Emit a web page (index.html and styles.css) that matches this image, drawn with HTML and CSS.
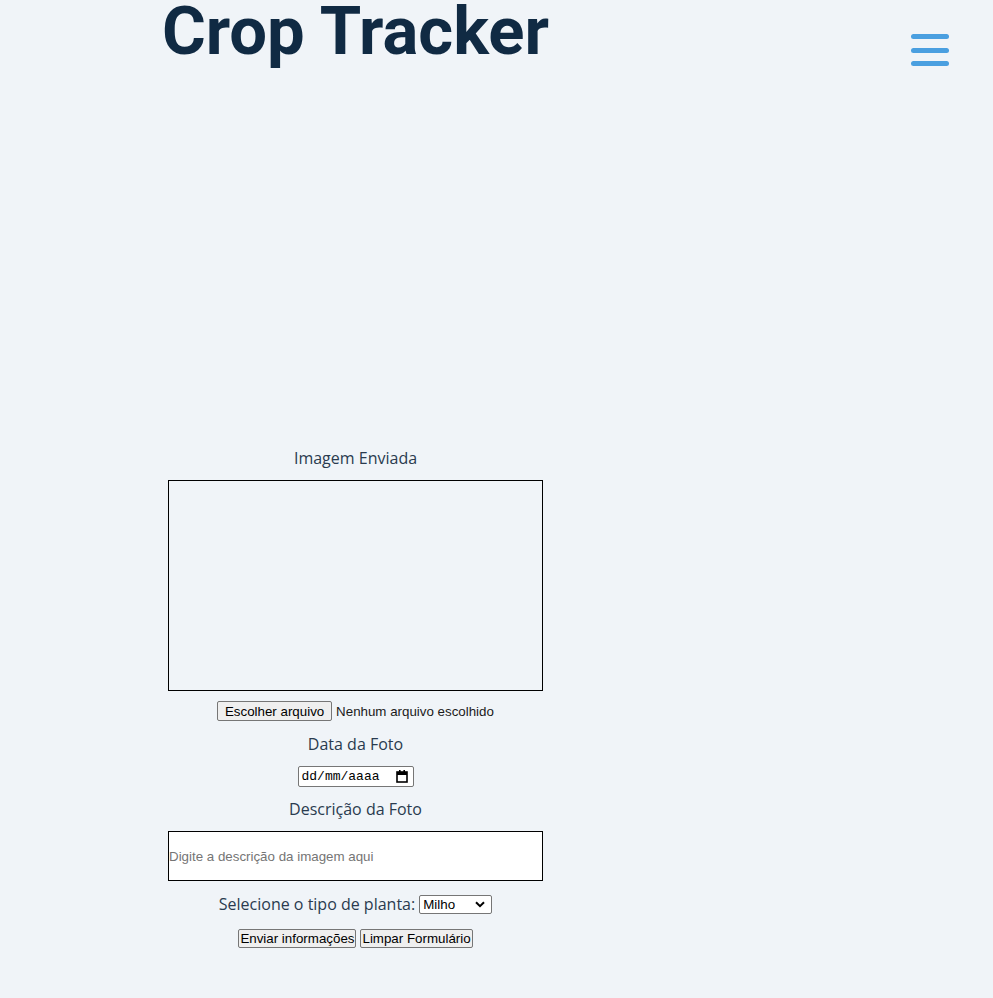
FILE: index.html
```html
<!DOCTYPE html>
<html lang="pt-BR">
<head>
<meta charset="utf-8">
<title>Crop Tracker</title>
<link rel="stylesheet" href="styles.css">
</head>
<body>
<header class="topbar">
  <h1 class="brand">Crop Tracker</h1>
  <button class="menu-btn" aria-label="Menu">
    <span class="bar"></span><span class="bar"></span><span class="bar"></span>
  </button>
</header>
<main class="panel">
  <p class="label label-first">Imagem Enviada</p>
  <div class="preview"></div>
  <div class="file-row">
    <span class="btn btn-file">Escolher arquivo</span>
    <span class="file-status">Nenhum arquivo escolhido</span>
  </div>
  <p class="label label-date">Data da Foto</p>
  <div class="date-input">
    <span class="date-text">dd/mm/aaaa</span>
    <svg class="cal" width="12" height="13" viewBox="0 0 12 13" aria-hidden="true">
      <rect x="1" y="2" width="10" height="10" fill="none" stroke="#000" stroke-width="1.6"/>
      <rect x="1" y="2" width="10" height="3" fill="#000"/>
      <rect x="3" y="0" width="1.6" height="3" fill="#000"/>
      <rect x="7.4" y="0" width="1.6" height="3" fill="#000"/>
    </svg>
  </div>
  <p class="label label-desc">Descrição da Foto</p>
  <input class="desc-input" type="text" placeholder="Digite a descrição da imagem aqui">
  <div class="plant-row">
    <span class="plant-label">Selecione o tipo de planta:</span>
    <span class="select">
      <span class="select-text">Milho</span>
      <svg class="chev" width="10" height="7" viewBox="0 0 10 7" aria-hidden="true">
        <path d="M1 1.2 L5 5.2 L9 1.2" fill="none" stroke="#000" stroke-width="2"/>
      </svg>
    </span>
  </div>
  <div class="actions">
    <button class="btn btn-action">Enviar informações</button>
    <button class="btn btn-action">Limpar Formulário</button>
  </div>
</main>
</body>
</html>
```
FILE: styles.css
```css
* { box-sizing: border-box; }

body {
  margin: 0;
  background: #f0f4f8;
  font-family: "Open Sans", "Noto Sans", sans-serif;
  color: #243b53;
}

.topbar {
  display: flex;
  justify-content: space-between;
  align-items: flex-start;
}

.brand {
  width: 375px;
  margin: 0 0 0 168px;
  font-family: Roboto, "Liberation Sans", sans-serif;
  font-weight: 700;
  font-size: 67px;
  line-height: 62px;
  color: #102a43;
  text-align: center;
  white-space: nowrap;
  display: flex;
  justify-content: center;
}

.menu-btn {
  margin: 34px 44px 0 0;
  padding: 0;
  border: 0;
  background: none;
  display: flex;
  flex-direction: column;
  gap: 8.5px;
  cursor: pointer;
}

.bar {
  display: block;
  width: 38px;
  height: 5px;
  border-radius: 3px;
  background: #4a9fe0;
}

.panel {
  width: 375px;
  margin-left: 168px;
  padding-top: 381px;
  display: flex;
  flex-direction: column;
  align-items: center;
}

.label {
  margin: 0;
  font-size: 16px;
  line-height: 22px;
  color: #2a3b4f;
}

.label-date { margin-top: 12px; }
.label-desc { margin-top: 11px; }

.preview {
  margin-top: 11px;
  width: 375px;
  height: 211px;
  border: 1px solid #000;
}

.btn {
  font-family: "Liberation Sans", Arial, sans-serif;
  font-size: 13.33px;
  color: #000;
  background: #efefef;
  border: 1px solid #767676;
  border-radius: 2px;
  display: inline-flex;
  align-items: center;
  justify-content: center;
}

.file-row {
  margin-top: 10px;
  display: flex;
  align-items: center;
  gap: 4px;
  font-family: "Liberation Sans", Arial, sans-serif;
  font-size: 13.33px;
  color: #000;
}

.btn-file {
  width: 115px;
  height: 20px;
}

.file-status { color: #1b1b1b; }

.date-input {
  margin-top: 11px;
  width: 116px;
  height: 21px;
  border: 1px solid #767676;
  border-radius: 2px;
  background: #fff;
  display: flex;
  align-items: center;
  justify-content: space-between;
  padding: 0 5px 0 3px;
}

.date-text {
  font-family: "Liberation Mono", monospace;
  font-size: 13px;
  color: #000;
}

.desc-input {
  margin-top: 11px;
  width: 375px;
  height: 50px;
  border: 1px solid #000;
  background: #fff;
  padding: 0;
  font-family: "Liberation Sans", Arial, sans-serif;
  font-size: 13.33px;
}

.desc-input::placeholder { color: #757575; }

.plant-row {
  margin-top: 12px;
  display: flex;
  align-items: center;
  gap: 4px;
}

.plant-label {
  font-size: 16px;
  line-height: 22px;
  color: #2a3b4f;
}

.select {
  width: 73px;
  height: 19px;
  border: 1px solid #767676;
  border-radius: 2px;
  background: #fff;
  display: flex;
  align-items: center;
  justify-content: space-between;
  padding: 0 6px 0 3px;
  font-family: "Liberation Sans", Arial, sans-serif;
  font-size: 13.33px;
  color: #000;
}

.actions {
  margin-top: 14px;
  display: flex;
  gap: 4px;
}

.btn-action {
  height: 19px;
  padding: 0 1px;
}
```
